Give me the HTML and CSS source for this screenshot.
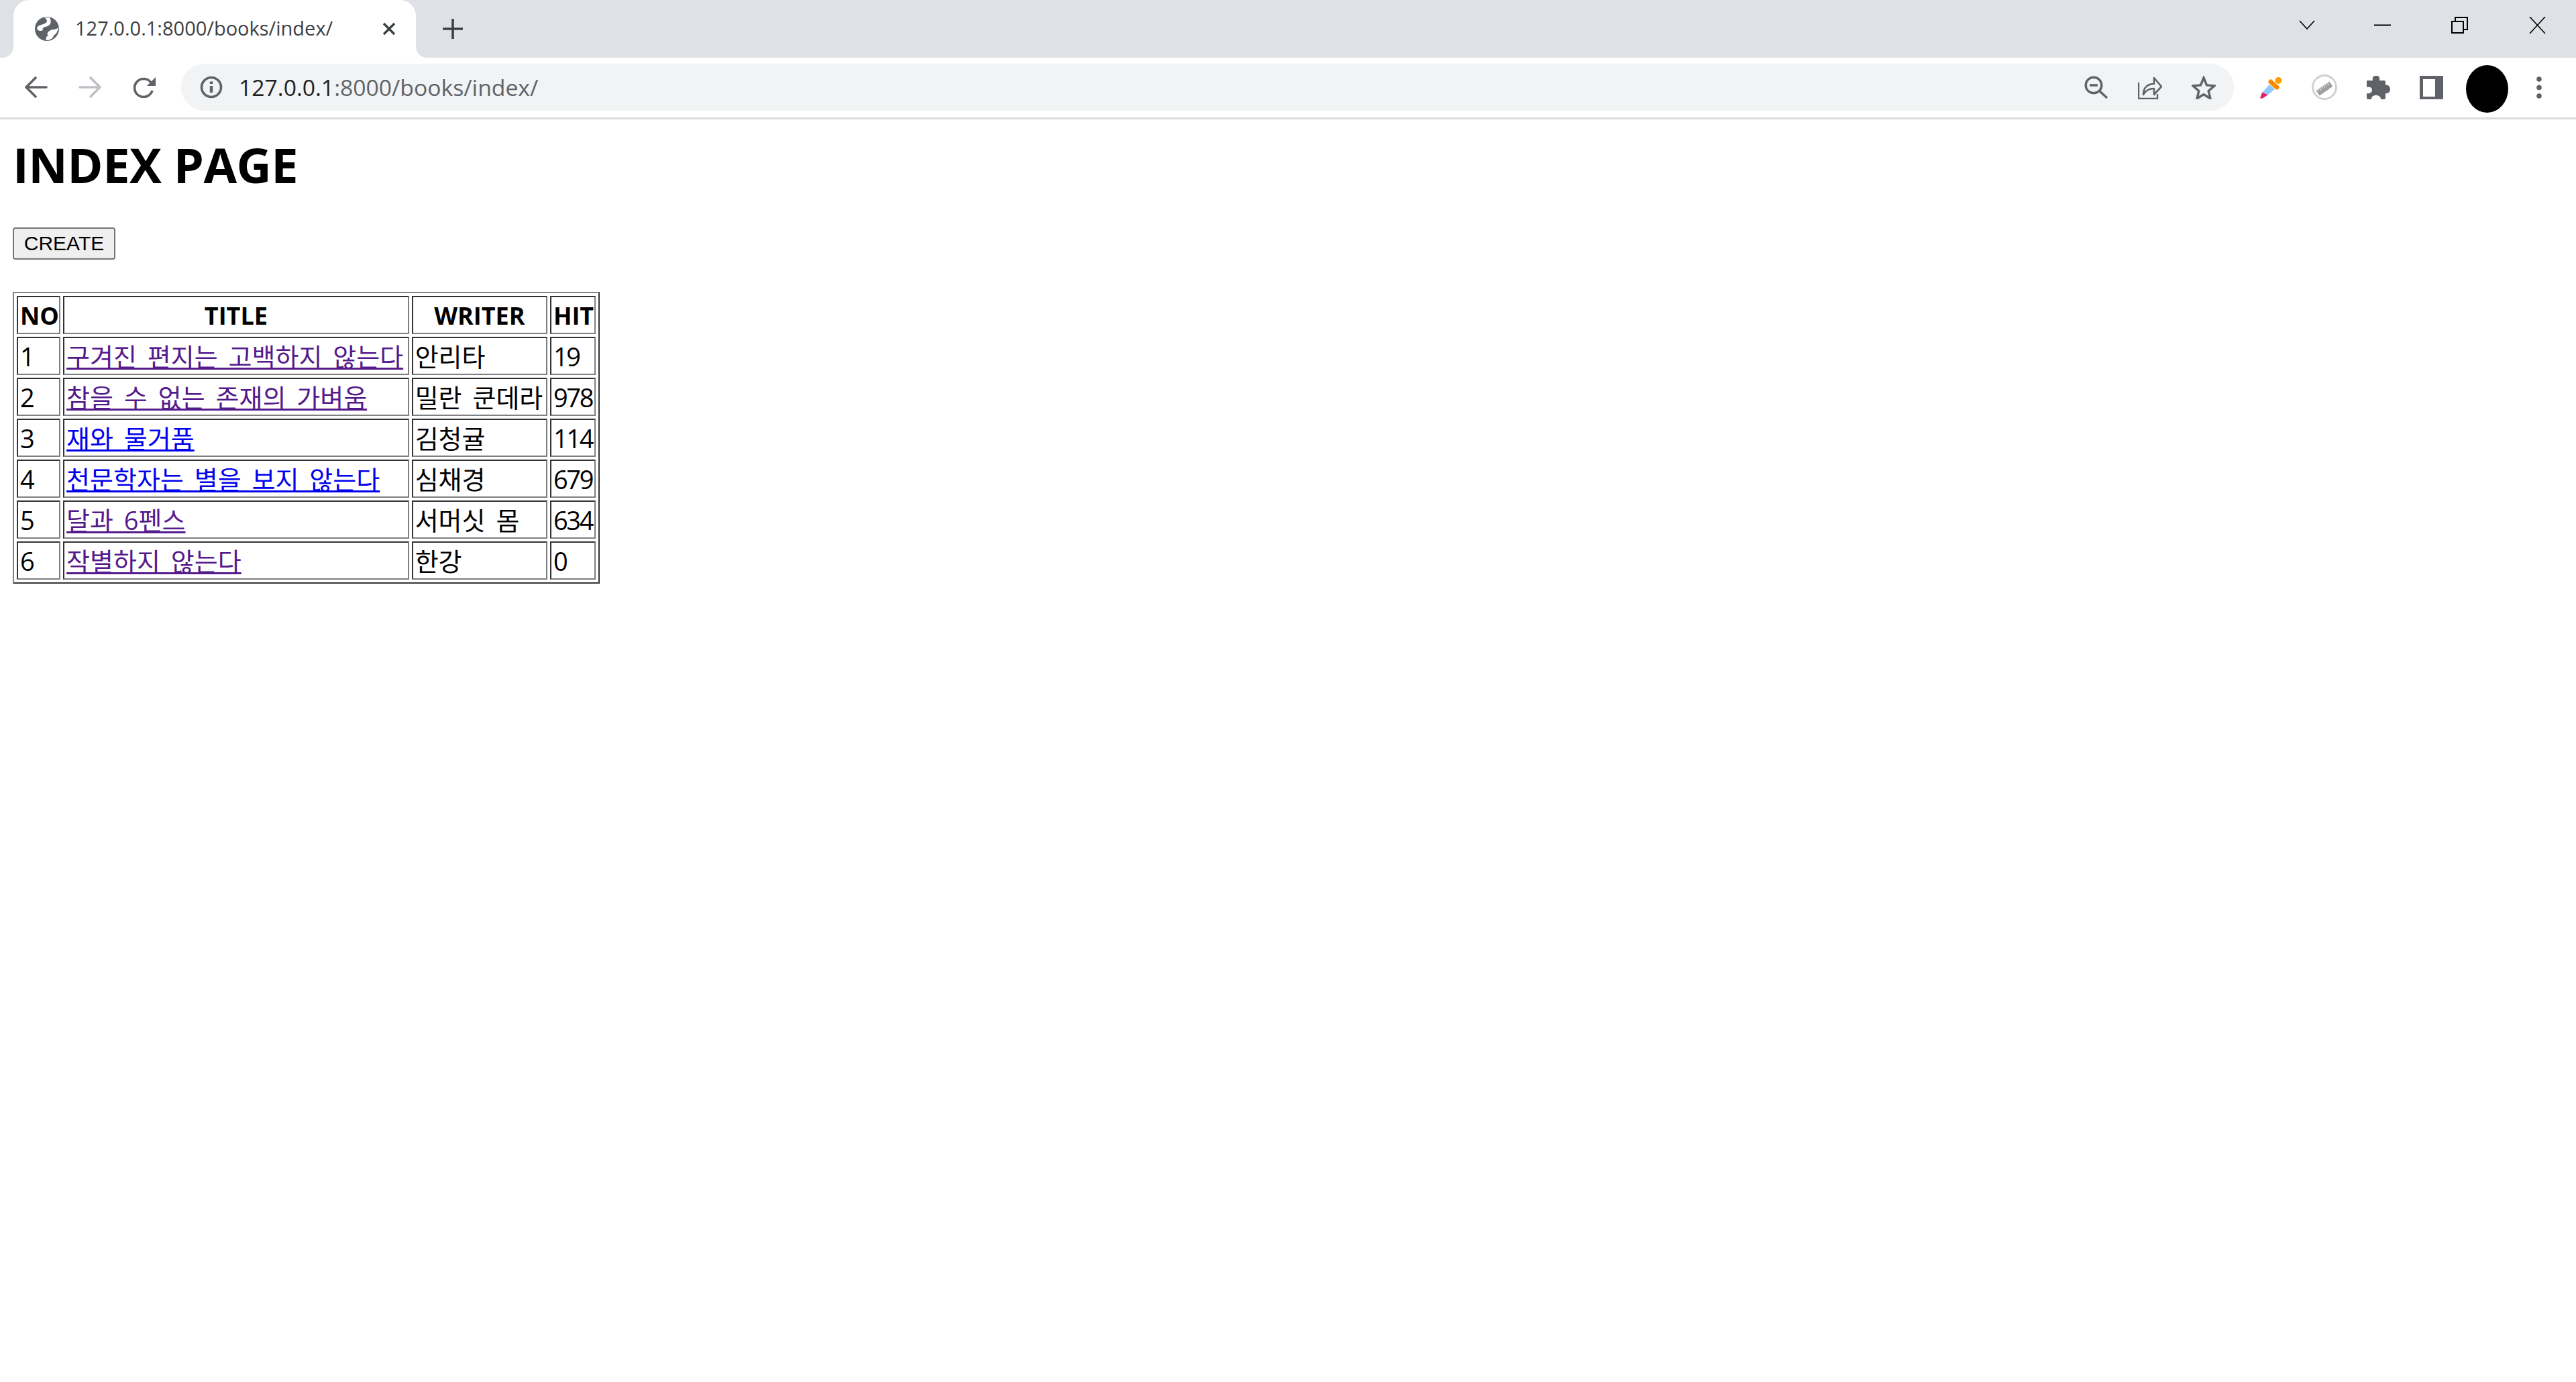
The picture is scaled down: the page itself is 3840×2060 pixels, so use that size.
FILE: index.html
```html
<!DOCTYPE html>
<html lang="ko">
<head>
  <meta charset="UTF-8" />
  <title>127.0.0.1:8000/books/index/</title>
  <link rel="stylesheet" href="styles.css">
</head>
<body>
  <div class="tabstrip">
    <div class="tab">
      <svg class="favicon" viewBox="0 0 36 36"><circle cx="18" cy="18" r="18" fill="#5f6368"/><path d="M14 1C19 4 19 8 15 10 11 12 5 12 3 17 4 21 8 22 12 20 10 17 14 15 19 14 24 12 25 6 22 1z" fill="#fff"/><path d="M35 16C31 20 26 18 22 21 18 23 18 27 20 28 17 29 16 32 17 35 23 35 27 32 28 28 31 26 34 23 35 16z" fill="#fff"/></svg>
      <span class="tab-title">127.0.0.1:8000/books/index/</span>
      <svg class="tab-close" viewBox="0 0 20 20"><path d="M2 2l16 16M18 2L2 18" stroke="#3c4043" stroke-width="3.4" fill="none"/></svg>
    </div>
    <svg class="new-tab" viewBox="0 0 30 30"><path d="M15 0v30M0 15h30" stroke="#3c4043" stroke-width="3.6" fill="none"/></svg>
    <div class="win-controls">
      <svg class="win-chevron" viewBox="0 0 24 14"><path d="M1 1l11 12L23 1" stroke="#000" stroke-width="1.6" fill="none"/></svg>
      <svg class="win-min" viewBox="0 0 25 3"><path d="M0 1.500h25" stroke="#000" stroke-width="2"/></svg>
      <svg class="win-restore" viewBox="0 0 25 25"><path d="M1 7h17v17H1zM6 7V1h18v18h-6" stroke="#000" stroke-width="2" fill="none"/></svg>
      <svg class="win-close" viewBox="0 0 25 25"><path d="M1 0l23 25M24 0L1 25" stroke="#000" stroke-width="1.600" fill="none"/></svg>
    </div>
  </div>

  <div class="toolbar">
    <svg class="nav-icon" viewBox="0 0 36 32"><path d="M33 16H4M17 2L3 16l14 14" stroke="#5f6368" stroke-width="3.600" stroke-linecap="round" stroke-linejoin="round" fill="none"/></svg>
    <svg class="nav-icon nav-forward" viewBox="0 0 36 32"><path d="M2 16h29M18 2l14 14-14 14" stroke="#bdc1c6" stroke-width="3.600" stroke-linecap="round" stroke-linejoin="round" fill="none"/></svg>
    <svg class="nav-icon nav-reload" viewBox="0 0 36 32"><path d="M29 21a13.500 13.500 0 1 1-2-12" stroke="#5f6368" stroke-width="3.600" fill="none"/><path d="M34 1v13H21z" fill="#5f6368"/></svg>

    <div class="omnibox">
      <svg class="info-icon" viewBox="0 0 34 34"><circle cx="17" cy="17" r="14.500" stroke="#5f6368" stroke-width="3.600" fill="none"/><path d="M17 15v10M17 8.500v3.500" stroke="#5f6368" stroke-width="4.400"/></svg>
      <span class="url"><span class="url-host">127.0.0.1</span>:8000/books/index/</span>
      <div class="omni-actions">
        <svg class="omni-icon" viewBox="0 0 36 35"><circle cx="14" cy="14" r="11.800" stroke="#5f6368" stroke-width="3.400" fill="none"/><path d="M8 14h12M22 22l12 11" stroke="#5f6368" stroke-width="3.400" fill="none"/></svg>
        <svg class="omni-icon" viewBox="0 0 36 35"><path d="M1 10v24h28v-7" stroke="#5f6368" stroke-width="2.400" fill="none"/><path d="M8 28c0-11 7-16 16-16V3l11 13-11 12v-9c-7 0-12 2-16 9z" stroke="#5f6368" stroke-width="2.600" stroke-linejoin="round" fill="none"/></svg>
        <svg class="omni-icon" viewBox="0 0 36 35"><path d="M18 3l4.500 11 11.500 1-8.800 7.500 2.700 11.300-9.900-6-9.900 6 2.700-11.300L2 15l11.500-1z" stroke="#5f6368" stroke-width="3.400" fill="none"/></svg>
      </div>
    </div>

    <div class="extensions">
      <svg class="ext-dropper" viewBox="0 0 33 33"><path d="M14 12l8 7-10 8-9-3z" fill="#90caf9"/><path d="M3 24l9 3-8 5.500H0z" fill="#e91e63"/><circle cx="27.500" cy="6" r="5" fill="#ffa000"/><path d="M16 8l9 8" stroke="#fb8c00" stroke-width="7" stroke-linecap="round"/></svg>
      <svg class="ext-ruler" viewBox="0 0 38 38"><circle cx="19" cy="19" r="17.500" stroke="#cfcfcf" stroke-width="2.800" fill="#fff"/><g transform="rotate(-35 19 21)"><rect x="7" y="16.500" width="24" height="9" fill="#9e9e9e"/><path d="M10 16.500v3M13.500 16.500v4M17 16.500v3M20.500 16.500v4M24 16.500v3M27.500 16.500v4" stroke="#fff" stroke-width="1"/></g></svg>
      <svg class="ext-puzzle" viewBox="0 0 35 35"><path d="M3 7H9C8 2 10 0 14 0S20 2 19 7H26a2 2 0 0 1 2 2V14C32 13 35 16 35 20S32 27 28 26V33a2 2 0 0 1-2 2H21C21 31 18 29 14 29S7 31 7 35H2a2 2 0 0 1-2-2V26C4 27 8 25 8 21S4 16 0 17V9a2 2 0 0 1 3-2z" fill="#5f6368"/></svg>
      <svg class="ext-sidebar" viewBox="0 0 35 35"><path d="M0 0h35v35H0z" fill="#5f6368"/><path d="M5 5h18v26H5z" fill="#fff"/></svg>
      <div class="avatar"></div>
      <svg class="menu-dots" viewBox="0 0 8 33"><circle cx="4" cy="4" r="3.800" fill="#5f6368"/><circle cx="4" cy="16.500" r="3.800" fill="#5f6368"/><circle cx="4" cy="29" r="3.800" fill="#5f6368"/></svg>
    </div>
  </div>

  <div class="page">
    <h1>INDEX PAGE</h1>
    <button class="create-btn">CREATE</button>
    <table class="book-table">
      <thead>
        <tr>
          <th class="col-no">NO</th>
          <th class="col-title">TITLE</th>
          <th class="col-writer">WRITER</th>
          <th class="col-hit">HIT</th>
        </tr>
      </thead>
      <tbody>
        <tr><td class="num">1</td><td><a class="visited" href="#">구겨진 편지는 고백하지 않는다</a></td><td>안리타</td><td class="num">19</td></tr>
        <tr><td class="num">2</td><td><a class="visited" href="#">참을 수 없는 존재의 가벼움</a></td><td>밀란 쿤데라</td><td class="num">978</td></tr>
        <tr><td class="num">3</td><td><a href="#">재와 물거품</a></td><td>김청귤</td><td class="num">114</td></tr>
        <tr><td class="num">4</td><td><a href="#">천문학자는 별을 보지 않는다</a></td><td>심채경</td><td class="num">679</td></tr>
        <tr><td class="num">5</td><td><a class="visited" href="#">달과 6펜스</a></td><td>서머싯 몸</td><td class="num">634</td></tr>
        <tr><td class="num">6</td><td><a class="visited" href="#">작별하지 않는다</a></td><td>한강</td><td class="num">0</td></tr>
      </tbody>
    </table>
  </div>
</body>
</html>
```
FILE: styles.css
```css
body {
  margin: 0;
  background: #fff;
  color: #000;
  font-family: 'Open Sans', 'Noto Sans CJK KR', sans-serif;
}

svg {
  display: block;
  flex: none;
}

/* tab strip */
.tabstrip {
  display: flex;
  align-items: center;
  height: 86px;
  padding-left: 20px;
  background: #dee1e6;
}

.tab {
  display: flex;
  align-items: center;
  position: relative;
  width: 600px;
  height: 86px;
  box-sizing: border-box;
  padding-left: 32px;
  background: #fff;
  border-radius: 24px 24px 0 0;
}

.tab::before,
.tab::after {
  content: "";
  position: absolute;
  bottom: 0;
  width: 16px;
  height: 16px;
}

.tab::before {
  left: -16px;
  background: radial-gradient(circle at 0 0, transparent 15.500px, #fff 16px);
}

.tab::after {
  right: -16px;
  background: radial-gradient(circle at 100% 0, transparent 15.500px, #fff 16px);
}

.favicon {
  width: 36px;
  height: 36px;
}

.tab-title {
  margin: 0 0 3px 24px;
  width: 400px;
  font-size: 29px;
  color: #3c4043;
  white-space: nowrap;
}

.tab-close {
  width: 20px;
  height: 20px;
  margin-left: 58px;
}

.new-tab {
  width: 30px;
  height: 30px;
  margin-left: 40px;
}

.win-controls {
  display: flex;
  align-items: center;
  margin-left: auto;
  padding: 0 45px 12px 0;
}

.win-chevron {
  width: 24px;
  height: 14px;
}

.win-min {
  width: 25px;
  height: 3px;
  margin-left: 88px;
}

.win-restore {
  width: 25px;
  height: 25px;
  margin-left: 90px;
}

.win-close {
  width: 25px;
  height: 25px;
  margin-left: 91px;
}

/* toolbar */
.toolbar {
  display: flex;
  align-items: center;
  height: 92px;
  box-sizing: border-box;
  padding: 0 0 1px 36px;
  background: #fff;
  border-bottom: 3px solid #dadce0;
}

.nav-icon {
  width: 36px;
  height: 32px;
}

.nav-forward {
  margin-left: 45px;
}

.nav-reload {
  margin-left: 45px;
}

.omnibox {
  display: flex;
  align-items: center;
  width: 3060px;
  height: 70px;
  margin-left: 36px;
  box-sizing: border-box;
  padding-left: 28px;
  background: #f1f3f4;
  border-radius: 35px;
}

.info-icon {
  width: 34px;
  height: 34px;
}

.url {
  margin-left: 24px;
  font-size: 33.700px;
  color: #5f6368;
  white-space: nowrap;
}

.url-host {
  color: #202124;
}

.omni-actions {
  display: flex;
  align-items: center;
  gap: 44px;
  margin-left: auto;
  padding-right: 27px;
}

.omni-icon {
  width: 36px;
  height: 35px;
}

.extensions {
  display: flex;
  align-items: center;
  margin-left: 39px;
}

.ext-dropper {
  width: 33px;
  height: 33px;
}

.ext-ruler {
  width: 38px;
  height: 38px;
  margin-left: 44px;
}

.ext-puzzle {
  width: 35px;
  height: 35px;
  margin-left: 44px;
}

.ext-sidebar {
  width: 35px;
  height: 35px;
  margin-left: 44px;
}

.avatar {
  width: 63px;
  height: 71px;
  margin: 4px 0 0 34px;
  background: #000;
  border-radius: 50%;
}

.menu-dots {
  width: 8px;
  height: 33px;
  margin-left: 42px;
}

/* page content */
.page {
  padding: 0 19px;
}

h1 {
  margin: 0;
  padding-top: 25px;
  font-size: 72px;
  line-height: 84px;
  font-weight: 700;
  letter-spacing: -0.500px;
  white-space: nowrap;
}

.create-btn {
  display: block;
  width: 153px;
  height: 48px;
  margin-top: 52px;
  padding: 0;
  font-family: 'Liberation Sans', sans-serif;
  font-size: 30px;
  color: #000;
  background: #efefef;
  border: 2px solid #767676;
  border-radius: 4px;
}

.book-table {
  margin-top: 48px;
  border-collapse: separate;
  border-spacing: 4px;
  border: 2px solid;
  border-color: #808080 #333 #333 #808080;
  table-layout: fixed;
  width: 875px;
  font-size: 38px;
  line-height: 50px;
  word-spacing: 6px;
}

.book-table th,
.book-table td {
  height: 57px;
  box-sizing: border-box;
  padding: 0 3px;
  border: 2px solid;
  border-color: #333 #808080 #808080 #333;
  white-space: nowrap;
}

.book-table th {
  padding-top: 2px;
  font-size: 36px;
  font-weight: 700;
  text-align: center;
}

.book-table td {
  text-align: left;
}

.book-table td.num {
  letter-spacing: -2.300px;
}

.col-no {
  width: 65px;
}

.col-title {
  width: 515px;
}

.col-writer {
  width: 202px;
}

.col-hit {
  width: 68px;
}

.book-table a {
  color: #0000ee;
  text-decoration: underline;
  text-decoration-thickness: 3px;
}

.book-table a.visited {
  color: #551a8b;
}
```
